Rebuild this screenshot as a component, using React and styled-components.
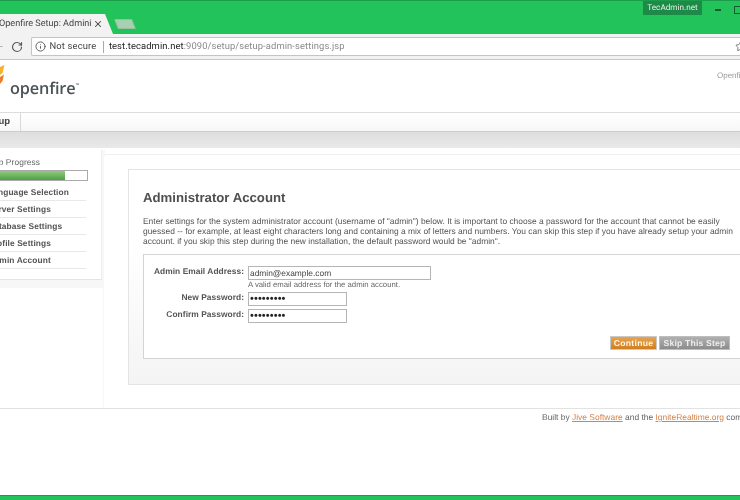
import React from "react";
import styled, { createGlobalStyle } from "styled-components";
import { ArrowLeft, RotateCw, Info, X, Star } from "lucide-react";

const Global = createGlobalStyle`
  html, body { margin: 0; padding: 0; background: #fff; }
  #root { width: 740px; height: 500px; overflow: hidden; }
`;

const Page = styled.div`
  width: 740px; height: 500px; overflow: hidden; display: flex; flex-direction: column;
  font-family: "Liberation Sans", Arial, sans-serif; color: #555; background: #fff;
  filter: blur(0.4px); text-rendering: geometricPrecision;
`;

const TitleBar = styled.div`
  height: 33px; flex: none; background: #22c35a; border-top: 1px solid #1c9c4a;
  display: flex; align-items: flex-end; position: relative;
`;
const Tab = styled.div`
  width: 124px; height: 20px; margin-left: -11px; flex: none; background: #f2f2f2;
  clip-path: polygon(0 0, 116px 0, 100% 100%, 0 100%);
  display: flex; align-items: center; padding-left: 10px; box-sizing: border-box; gap: 2px;
`;
const TabTitle = styled.span`
  font: 9.1px "Roboto", "Liberation Sans", sans-serif; color: #444; white-space: nowrap;
  width: 92px; overflow: hidden; flex: none;
`;
const NewTab = styled.div`
  width: 18px; height: 10px; margin: 0 0 5px 3px; background: #a9cfb2; transform: skewX(22deg);
  border-radius: 1px; border: 1px solid #93c19f; box-sizing: border-box;
`;
const UserBadge = styled.div`
  position: absolute; left: 643px; top: 0; width: 59px; height: 14px; background: #1d8a47;
  color: #dff0e4; font: 8.2px/14px "Roboto", sans-serif; text-align: center;
`;
const WinMin = styled.div`
  position: absolute; left: 715px; top: 8px; width: 6px; height: 1.5px; background: #145c2f;
`;
const WinMax = styled.div`
  position: absolute; left: 734px; top: 5px; width: 10px; height: 6px; border: 1px solid #145c2f;
`;

const Toolbar = styled.div`
  height: 25px; flex: none; background: #f2f2f2; border-bottom: 1px solid #c8c8c8;
  display: flex; align-items: center; box-sizing: content-box;
`;
const BackSlot = styled.div`
  width: 5px; flex: none; overflow: hidden; display: flex; justify-content: flex-end; color: #b5b5b5;
`;
const ReloadSlot = styled.div`
  margin-left: 6px; width: 20px; flex: none; color: #5a5a5a; display: flex;
`;
const Omnibox = styled.div`
  flex: 1; height: 19px; background: #fff; border: 1px solid #c4c4c4; border-right: 0;
  border-radius: 2px 0 0 2px; display: flex; align-items: center; padding-left: 3px; min-width: 0;
  font: 9.4px "Roboto", sans-serif; white-space: nowrap; box-sizing: border-box; position: relative;
`;
const Secure = styled.span`
  color: #444; margin-left: 3.5px; letter-spacing: 0.15px;
`;
const Sep = styled.span`
  width: 1px; height: 12px; background: #aaa; margin: 0 5px 0 6.5px;
`;
const Host = styled.span`color: #222; letter-spacing: 0.1px;`;
const Path = styled.span`color: #8a8a8a; letter-spacing: 0.1px;`;
const StarSlot = styled.span`
  position: absolute; left: 703px; top: 3px; color: #666; display: flex;
`;

const Header = styled.div`
  height: 53px; flex: none; background: #fff; border-bottom: 1px solid #dcdcdc; position: relative;
  display: flex; justify-content: space-between; padding-top: 5px; box-sizing: border-box;
`;
const Brand = styled.div`
  display: flex; align-items: flex-start;
`;
const Flame = styled.svg`
  width: 5px; height: 20px; flex: none;
`;
const Wordmark = styled.div`
  font: 600 16.3px/20px "Open Sans", sans-serif; color: #4b5357; margin: 13px 0 0 5px; letter-spacing: -0.15px;
  display: flex;
`;
const Tm = styled.span`font-size: 2.6px; line-height: 12px;`;
const Version = styled.div`
  font-size: 8px; color: #999; white-space: nowrap; position: absolute; left: 717px; top: 11px;
`;

const Nav = styled.div`
  height: 18px; flex: none; background: linear-gradient(#fff, #f7f7f7); border-bottom: 1px solid #ccc;
  display: flex;
`;
const NavItem = styled.div`
  width: 20px; border-right: 1px solid #d8d8d8; text-align: right; padding-right: 10px; box-sizing: content-box;
  margin-left: -10px; font: bold 9.5px/18px "Liberation Sans", sans-serif; color: #444; overflow: hidden;
  direction: rtl; white-space: nowrap;
`;
const Band = styled.div`
  height: 16px; flex: none; background: linear-gradient(#dedede, #e9e9e9);
`;

const Main = styled.div`
  display: flex; align-items: flex-start; height: 260px; flex: none; overflow: hidden;
`;
const SideWrap = styled.div`
  width: 105px; height: 138px; margin-top: 2px; flex: none; background: #f7f7f7; margin-right: -2px;
`;
const Sidebar = styled.div`
  width: 102px; height: 130px; background: #fff; border-right: 1px solid #eee; border-bottom: 1px solid #e4e4e4;
  box-sizing: border-box; padding-top: 6px; overflow: hidden;
`;
const ProgressTitle = styled.div`
  font: 8.4px/12px "Liberation Sans", sans-serif; color: #666; margin-left: -19px; white-space: nowrap; letter-spacing: 0.1px;
`;
const ProgressTrack = styled.div`
  width: 88px; height: 11px; margin-top: 2px; box-sizing: border-box; border: 1px solid #aaa; border-left: 0; background: #fff;
`;
const ProgressFill = styled.div`
  height: 100%; background: linear-gradient(#8fcb7f, #4f9f45);
`;
const SideList = styled.ul`
  list-style: none; margin: 3px 0 0; padding: 0; width: 86px;
`;
const SideItem = styled.li`
  height: 17px; box-sizing: border-box; border-bottom: 1px solid #e8e8e8;
  font: bold 8.4px/16px "Liberation Sans", sans-serif; color: #555; white-space: nowrap; letter-spacing: 0.1px;
  overflow: hidden;
`;
const SideLabel = styled.span`
  display: block; margin-left: -12px;
`;

const Content = styled.div`
  flex: 1; min-width: 0; margin-top: 6px; height: 254px; background: #fff; border-top: 1px solid #f0f0f0; border-left: 1px solid #f7f7f7;
  padding: 14px 0 0 24px; box-sizing: border-box; border-top-left-radius: 4px;
`;
const Card = styled.div`
  width: 660px; height: 216px; box-sizing: border-box; border: 1px solid #e4e4e4;
  background: linear-gradient(#fff 35%, #f4f4f4); padding: 18px 0 0 14px;
`;
const Title = styled.h1`
  margin: 0; font: bold 13.2px/20px "Liberation Sans", sans-serif; color: #4f4f4f;
`;
const Intro = styled.p`
  margin: 8px 0 0; font: 8.44px/10px "Liberation Sans", sans-serif; color: #555; white-space: nowrap;
`;
const FormBox = styled.div`
  margin-top: 8px; height: 105px; width: 640px; box-sizing: border-box; background: #fff; border: 1px solid #d4d4d4;
  padding: 11px 0 0 0; position: relative;
`;
const Row = styled.div`
  display: flex; align-items: flex-start; margin-bottom: ${p => p.$mb || 3}px;
`;
const Label = styled.label`
  width: 100px; text-align: right; flex: none; font: bold 8.4px/11px "Liberation Sans", sans-serif; color: #555; letter-spacing: 0.05px;
  white-space: nowrap;
`;
const Field = styled.div`
  margin-left: 4px; display: flex; flex-direction: column;
`;
const Input = styled.div`
  width: ${p => p.$w}px; height: 14px; box-sizing: border-box; background: #fff; border: 1px solid #b5b5b5;
  padding-left: 1px; color: ${p => p.$pw ? "#222" : "#444"};
  font: ${p => p.$pw ? "11px/12px" : "8.4px/12px"} "Liberation Sans", sans-serif;
  letter-spacing: ${p => p.$pw ? "0.1px" : "0"};
`;
const Hint = styled.div`
  font: 7.75px/9px "Liberation Sans", sans-serif; color: #666; white-space: nowrap;
`;
const Actions = styled.div`
  position: absolute; left: 466px; top: 81px; display: flex; gap: 2px;
`;
const Btn = styled.div`
  height: 14px; box-sizing: border-box; width: ${p => p.$w}px; text-align: center;
  background: ${p => p.$primary ? "linear-gradient(#e9a44c, #d07f1f)" : "linear-gradient(#b0b0b0, #8c8c8c)"};
  border: 1px solid ${p => p.$primary ? "#c9c9c9" : "#bdbdbd"}; color: ${p => p.$primary ? "#fdf6ea" : "#eee"};
  font: bold 8.6px/12px "Liberation Sans", sans-serif; letter-spacing: ${p => p.$primary ? "0.3px" : "0.2px"};
`;

const Footer = styled.div`
  border-top: 1px solid #e2e2e2; flex: 1; padding: 3px 0 0 542px;
  font: 8.45px/11px "Liberation Sans", sans-serif; color: #666; white-space: nowrap; overflow: hidden;
`;
const FootLink = styled.a`
  color: #d5834a; text-decoration: underline;
`;
const BottomBar = styled.div`
  height: 5px; flex: none; background: #22c35a; border-top: 1px solid #1c9c4a; box-sizing: border-box;
`;

const steps = [
  "Language Selection", "Server Settings", "Database Settings", "Profile Settings", "Admin Account",
];

export default function App() {
  return (
    <Page>
      <Global />
      <TitleBar>
        <Tab>
          <TabTitle>Openfire Setup: Administ</TabTitle>
          <X size={10} color="#444" strokeWidth={2.5} />
        </Tab>
        <NewTab />
        <UserBadge>TecAdmin.net</UserBadge>
        <WinMin />
        <WinMax />
      </TitleBar>
      <Toolbar>
        <BackSlot><ArrowLeft size={13} strokeWidth={2.2} style={{ flex: "none" }} /></BackSlot>
        <ReloadSlot><RotateCw size={12} strokeWidth={2.4} /></ReloadSlot>
        <Omnibox>
          <Info size={11} color="#555" strokeWidth={2} />
          <Secure>Not secure</Secure>
          <Sep />
          <Host>test.tecadmin.net</Host>
          <Path>:9090/setup/setup-admin-settings.jsp</Path>
          <StarSlot><Star size={11} strokeWidth={1.8} /></StarSlot>
        </Omnibox>
      </Toolbar>
      <Header>
        <Brand>
          <Flame viewBox="0 0 5 20">
            <path d="M0 2 L4.5 0 L2.5 8 L0 10 Z" fill="#f6b22c" />
            <path d="M0 12 L4 9.5 L2.5 16 L0 19 Z" fill="#ee7d2b" />
          </Flame>
          <Wordmark>openfire<Tm>TM</Tm></Wordmark>
        </Brand>
        <Version>Openfire Setup</Version>
      </Header>
      <Nav><NavItem>Setup</NavItem></Nav>
      <Band />
      <Main>
        <SideWrap>
          <Sidebar>
            <ProgressTitle>Setup Progress</ProgressTitle>
            <ProgressTrack><ProgressFill style={{ width: "75%" }} /></ProgressTrack>
            <SideList>
              {steps.map(s => (
                <SideItem key={s}><SideLabel>{s}</SideLabel></SideItem>
              ))}
            </SideList>
          </Sidebar>
        </SideWrap>
        <Content>
          <Card>
            <Title>Administrator Account</Title>
            <Intro>
              Enter settings for the system administrator account (username of "admin") below. It is important to choose a password for the account that cannot be easily<br />
              guessed -- for example, at least eight characters long and containing a mix of letters and numbers. You can skip this step if you have already setup your admin<br />
              account. if you skip this step during the new installation, the default password would be "admin".
            </Intro>
            <FormBox>
              <Row $mb={0}>
                <Label>Admin Email Address:</Label>
                <Field>
                  <Input $w={183}>admin@example.com</Input>
                  <Hint>A valid email address for the admin account.</Hint>
                </Field>
              </Row>
              <Row>
                <Label>New Password:</Label>
                <Field><Input $w={99} $pw>•••••••••</Input></Field>
              </Row>
              <Row>
                <Label>Confirm Password:</Label>
                <Field><Input $w={99} $pw>•••••••••</Input></Field>
              </Row>
              <Actions>
                <Btn $primary $w={47}>Continue</Btn>
                <Btn $w={71}>Skip This Step</Btn>
              </Actions>
            </FormBox>
          </Card>
        </Content>
      </Main>
      <Footer>
        Built by <FootLink>Jive Software</FootLink> and the <FootLink>IgniteRealtime.org</FootLink> community
      </Footer>
      <BottomBar />
    </Page>
  );
}
